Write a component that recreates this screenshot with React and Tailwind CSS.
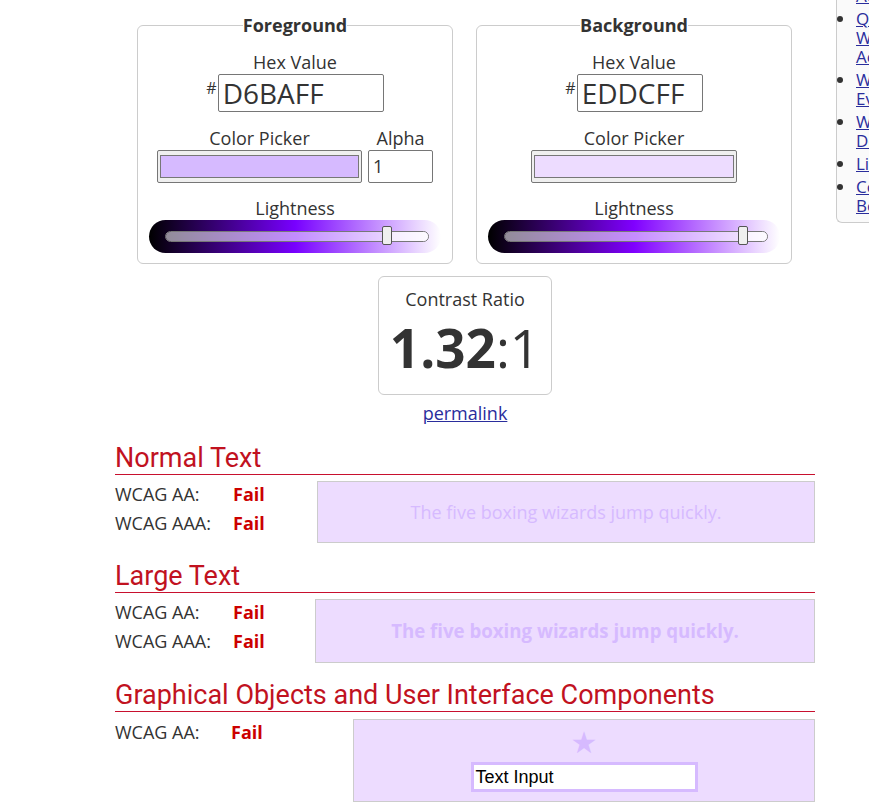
import React from "react";

function Slider({ gradient, thumbLeft, fillWidth }) {
  return (
    <div className={`mx-auto w-[292px] h-[33px] rounded-full flex items-center pl-[16px] pr-[12px] ${gradient}`}>
      <div className="relative flex-1 h-[11px]">
        <div className="absolute inset-0 rounded-full border border-[#777] overflow-hidden flex">
          <div className={`h-full bg-[rgba(255,255,255,0.55)] ${fillWidth}`} />
          <div className="h-full flex-1 bg-[rgba(255,255,255,0.8)]" />
        </div>
        <div className={`absolute top-[-5px] w-[10px] h-[19px] rounded-[2px] border-[1.5px] border-[#555] bg-[#efefef] ${thumbLeft}`} />
      </div>
    </div>
  );
}

function Fieldset({ title, children }) {
  return (
    <fieldset className="w-[316px] border border-[#ccc] rounded-[6px] px-0 pb-[10px] pt-0 m-0 min-w-0">
      <legend className="mx-auto px-0 text-[18px] leading-[24px] font-bold text-[#333]">{title}</legend>
      {children}
    </fieldset>
  );
}

function HexRow({ value, widthClass }) {
  return (
    <>
      <div className="mt-[13px] text-center text-[18px] leading-[24px]">Hex Value</div>
      <div className="flex justify-center items-start">
        <span className="text-[16px] leading-[16px] mt-[6px] mr-[1px]">#</span>
        <div className={`h-[38px] border border-[#767676] rounded-[2px] pl-[4px] flex items-center text-[28px] text-[#333] ${widthClass}`}>
          {value}
        </div>
      </div>
    </>
  );
}

function ColorSwatch({ color, widthClass }) {
  return (
    <div className={`h-[33px] bg-[#efefef] border border-[#767676] rounded-[2px] px-[2px] py-[4px] ${widthClass}`}>
      <div className={`w-full h-full border border-[#777] ${color}`} />
    </div>
  );
}

function Heading({ children }) {
  return (
    <>
      <h2 className="font-['Roboto',sans-serif] text-[27px] leading-[32px] font-normal text-[#c1121f]">
        {children}
      </h2>
      <div className="h-px bg-[#c8102e]" />
    </>
  );
}

function Row({ label, labelClass }) {
  return (
    <div className="flex text-[18px] leading-[29px]">
      <span className={labelClass}>{label}</span>
      <span className="font-bold text-[#cc0000]">Fail</span>
    </div>
  );
}

export default function App() {
  const links = [
    ["Contrast and Color", "Accessibility"],
    ["Quick Reference: Testing", "Web Content for", "Accessibility"],
    ["WAVE Web Accessibility", "Evaluation Tool"],
    ["WAVE Browser and", "Developer Extensions"],
    ["Link Contrast Checker"],
    ["Color Contrast Checker", "Bookmarklet"],
  ];
  return (
    <div className="w-[869px] h-[809px] overflow-hidden bg-white flex items-start font-['Open_Sans',sans-serif] text-[#333]">
      <main className="ml-[115px] w-[700px] shrink-0">
        <div className="flex gap-[23px] mt-[13px] pl-[22px]">
          <Fieldset title="Foreground">
            <HexRow value="D6BAFF" widthClass="w-[166px]" />
            <div className="flex justify-center gap-[6px] mt-[14px]">
              <div className="flex flex-col items-center">
                <div className="text-[18px] leading-[24px]">Color Picker</div>
                <ColorSwatch color="bg-[#D6BAFF]" widthClass="w-[205px]" />
              </div>
              <div className="flex flex-col items-center">
                <div className="text-[18px] leading-[24px]">Alpha</div>
                <div className="w-[65px] h-[33px] border border-[#767676] rounded-[2px] px-[4px] flex items-center text-[18px]">1</div>
              </div>
            </div>
            <div className="mt-[13px] text-center text-[18px] leading-[24px]">Lightness</div>
            <Slider
              gradient="bg-[linear-gradient(to_right,#000_0%,#7800ff_50%,#fff_100%)]"
              thumbLeft="left-[217px]"
              fillWidth="w-[222px]"
            />
          </Fieldset>
          <Fieldset title="Background">
            <HexRow value="EDDCFF" widthClass="w-[126px]" />
            <div className="flex justify-center mt-[14px]">
              <div className="flex flex-col items-center">
                <div className="text-[18px] leading-[24px]">Color Picker</div>
                <ColorSwatch color="bg-[#EDDCFF]" widthClass="w-[206px]" />
              </div>
            </div>
            <div className="mt-[13px] text-center text-[18px] leading-[24px]">Lightness</div>
            <Slider
              gradient="bg-[linear-gradient(to_right,#000_0%,#8000ff_50%,#fff_100%)]"
              thumbLeft="left-[234px]"
              fillWidth="w-[239px]"
            />
          </Fieldset>
        </div>

        <div className="mx-auto mt-[12px] w-[174px] h-[119px] border border-[#ccc] rounded-[6px] text-center">
          <div className="mt-[10px] text-[18px] leading-[24px]">Contrast Ratio</div>
          <div className="mt-[10px] text-[53px] leading-[53px] text-[#333]">
            <span className="font-bold">1.32</span>:1
          </div>
        </div>
        <div className="mt-[6px] text-center text-[18px] leading-[24px]">
          <a href="#" className="underline text-[#2a2d9c]">permalink</a>
        </div>

        <section className="mt-[17px]">
          <Heading>Normal Text</Heading>
          <div className="flex items-start">
            <div className="w-[202px] mt-[5px]">
              <Row label="WCAG AA:" labelClass="w-[118px]" />
              <Row label="WCAG AAA:" labelClass="w-[118px]" />
            </div>
            <div className="flex-1 mt-[6px] h-[62px] bg-[#EDDCFF] border border-[#ccc] flex items-center justify-center text-[18px] text-[#D6BAFF]">
              The five boxing wizards jump quickly.
            </div>
          </div>
        </section>

        <section className="mt-[17px]">
          <Heading>Large Text</Heading>
          <div className="flex items-start">
            <div className="w-[200px] mt-[5px]">
              <Row label="WCAG AA:" labelClass="w-[118px]" />
              <Row label="WCAG AAA:" labelClass="w-[118px]" />
            </div>
            <div className="flex-1 mt-[6px] h-[64px] bg-[#EDDCFF] border border-[#ccc] flex items-center justify-center text-[18.67px] font-bold text-[#D6BAFF]">
              The five boxing wizards jump quickly.
            </div>
          </div>
        </section>

        <section className="mt-[16px]">
          <Heading>Graphical Objects and User Interface Components</Heading>
          <div className="flex items-start">
            <div className="w-[238px] mt-[6px]">
              <Row label="WCAG AA:" labelClass="w-[116px]" />
            </div>
            <div className="flex-1 mt-[7px] h-[83px] bg-[#EDDCFF] border border-[#ccc] flex flex-col items-center">
              <div className="mt-[8px] text-[30px] leading-[30px] text-[#D6BAFF] font-['DejaVu_Sans',sans-serif]">★</div>
              <div className="mt-[4px] w-[227px] h-[30px] bg-white border-[3px] border-[#D6BAFF] px-[2px] flex items-center font-['Liberation_Sans',Arial,sans-serif] text-[18px] text-black">
                Text Input
              </div>
            </div>
          </div>
        </section>
      </main>

      <aside className="ml-[21px] w-[240px] shrink-0 mt-[-33px] bg-[#fafafa] border-l border-b border-[#ccc] rounded-bl-[6px] pb-[7px]">
        <ul className="list-disc pl-[19px] text-[17px] leading-[19px] flex flex-col gap-[4px]">
          {links.map((lines, i) => (
            <li key={i} className="marker:text-[#333]">
              <a href="#" className="underline text-[#2a2d9c]">
                {lines.map((l, j) => (
                  <React.Fragment key={j}>
                    {l}
                    {j < lines.length - 1 && <br />}
                  </React.Fragment>
                ))}
              </a>
            </li>
          ))}
        </ul>
      </aside>
    </div>
  );
}
